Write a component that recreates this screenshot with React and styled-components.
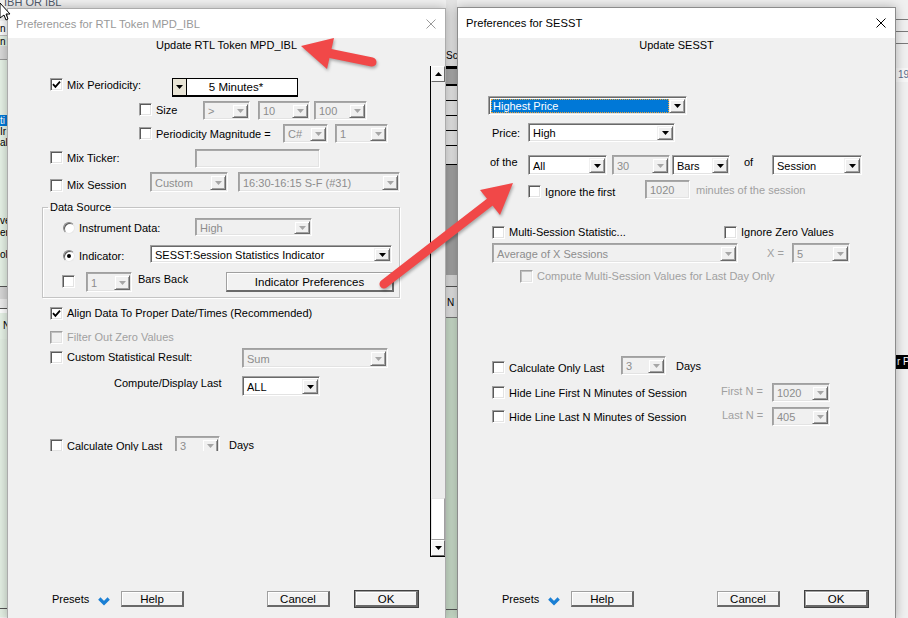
import styled, { createGlobalStyle } from "styled-components";

const GlobalStyle = createGlobalStyle`
  * { box-sizing: border-box; }
  body {
    margin: 0;
    background: #f0f0f0;
    font-family: "Liberation Sans", Arial, sans-serif;
  }
`;

// shifts an item inside a centred flex row: positive = down, negative = up
const shift = (p) => {
  const dy = p.$dy || 0;
  return `margin-top: ${dy > 0 ? dy * 2 : 0}px; margin-bottom: ${dy < 0 ? -dy * 2 : 0}px;`;
};

const Desktop = styled.div`
  position: relative;
  width: 908px;
  height: 618px;
  overflow: hidden;
  display: flex;
  align-items: flex-start;
  background: #f0f0f0;
  font-family: "Liberation Sans", Arial, sans-serif;
  font-size: 11px;
  color: #000;
`;

/* ---------- background application strips ---------- */

const Strip = styled.div`
  width: ${(p) => p.$w}px;
  height: 618px;
  flex-shrink: 0;
  display: flex;
  flex-direction: column;
`;

const Band = styled.div`
  height: ${(p) => p.$h}px;
  flex-shrink: 0;
  background: ${(p) => p.$bg || "#f0f0f0"};
  border-bottom: ${(p) => (p.$line ? `1px solid ${p.$line}` : "none")};
  color: ${(p) => p.$color || "#000"};
  line-height: ${(p) => p.$lh || p.$h}px;
  padding-left: ${(p) => p.$pl || 0}px;
  white-space: nowrap;
  font-size: 10px;
  overflow: hidden;
`;

const TopText = styled.div`
  height: 8px;
  width: 70px;
  flex-shrink: 0;
  padding-left: 4px;
  line-height: 4px;
  font-size: 11px;
  color: #505a6a;
  white-space: nowrap;
  overflow: hidden;
`;

/* ---------- dialog chrome ---------- */

const Dialog = styled.div`
  position: relative;
  z-index: 1;
  width: 439px;
  height: ${(p) => 620 - p.$top}px;
  margin-top: ${(p) => p.$top}px;
  flex-shrink: 0;
  display: flex;
  flex-direction: column;
  background: #f0f0f0;
  border: 1px solid ${(p) => (p.$active ? "#8c8c8c" : "#ababab")};
  box-shadow: 0 0 10px rgba(0, 0, 0, 0.28);
`;

const TitleBar = styled.div`
  height: ${(p) => p.$h}px;
  flex-shrink: 0;
  display: flex;
  align-items: center;
  justify-content: space-between;
  padding: 0 9px 0 8px;
  background: #fff;
  color: ${(p) => (p.$active ? "#000" : "#999")};
  font-size: 11.2px;
`;

const Body = styled.div`
  flex: 1;
  display: flex;
  flex-direction: column;
  overflow: hidden;
`;

const Header = styled.div`
  height: 14px;
  flex-shrink: 0;
  line-height: 14px;
  text-align: center;
`;

const Middle = styled.div`
  display: flex;
  align-items: flex-start;
  margin-top: 14px;
`;

const Viewport = styled.div`
  flex: 1;
  height: 385px;
  overflow: hidden;
  display: flex;
  flex-direction: column;
`;

const Rows = styled.div`
  display: flex;
  flex-direction: column;
`;

const Row = styled.div`
  display: flex;
  align-items: center;
  flex-shrink: 0;
  height: ${(p) => p.$h || 19}px;
  margin-top: ${(p) => p.$mt || 0}px;
  padding-left: ${(p) => p.$pl || 0}px;
`;

const Group = styled.fieldset`
  margin: ${(p) => p.$mt}px 0 0 34px;
  width: 358px;
  min-inline-size: auto;
  padding: 0 0 5px 0;
  border: 1px solid #c4c4c4;
  box-shadow: 1px 1px 0 #fff, inset 1px 1px 0 #fff;
`;

const Legend = styled.legend`
  margin-left: 5px;
  padding: 0 2px;
  line-height: 14px;
  font-size: 11px;
`;

/* ---------- controls ---------- */

const Opt = styled.label`
  display: flex;
  align-items: center;
  gap: 4px;
  flex-shrink: 0;
  width: ${(p) => (p.$w ? `${p.$w}px` : "auto")};
  margin-left: ${(p) => p.$ml || 0}px;
  color: ${(p) => (p.$off ? "#a0a0a0" : "#000")};
  white-space: nowrap;
  ${shift}
`;

const Text = styled.span`
  flex-shrink: 0;
  white-space: nowrap;
  width: ${(p) => (p.$w ? `${p.$w}px` : "auto")};
  margin-left: ${(p) => p.$ml || 0}px;
  color: ${(p) => (p.$off ? "#a0a0a0" : "#000")};
  ${shift}
`;

const Box = styled.span`
  width: 13px;
  height: 13px;
  flex-shrink: 0;
  display: flex;
  align-items: center;
  justify-content: center;
  background: ${(p) => (p.$off ? "#f0f0f0" : "#fff")};
  border: 1px solid;
  border-color: #a0a0a0 #fff #fff #a0a0a0;
  box-shadow: inset 1px 1px 0 ${(p) => (p.$off ? "#c0c0c0" : "#5a5a5a")},
    inset -1px -1px 0 #e3e3e3;
`;

const RadioDot = styled.span`
  width: 12px;
  height: 12px;
  flex-shrink: 0;
  border-radius: 50%;
  display: flex;
  align-items: center;
  justify-content: center;
  background: #fff;
  border: 1px solid;
  border-color: #8a8a8a #e8e8e8 #e8e8e8 #8a8a8a;
  box-shadow: inset 1px 1px 0 #5a5a5a;

  &::after {
    content: "";
    width: 4px;
    height: 4px;
    border-radius: 50%;
    background: ${(p) => (p.$on ? "#000" : "transparent")};
  }
`;

const Frame = styled.div`
  width: ${(p) => p.$w}px;
  height: ${(p) => p.$h || 19}px;
  margin-left: ${(p) => p.$ml || 0}px;
  flex-shrink: 0;
  display: flex;
  padding: 2px 1px 1px 2px;
  background: ${(p) => (p.$off ? "#f0f0f0" : "#fff")};
  border: 1px solid;
  border-color: #a0a0a0 #fff #fff #a0a0a0;
  box-shadow: inset 1px 1px 0 ${(p) => (p.$off ? "#a8a8a8" : "#696969")},
    inset -1px -1px 0 #e3e3e3;
`;

const Value = styled.span`
  flex: 1;
  min-width: 0;
  display: flex;
  align-items: center;
  padding-left: 2px;
  white-space: nowrap;
  overflow: hidden;
  color: ${(p) => (p.$sel ? "#fff" : p.$off ? "#8d8d8d" : "#000")};
  background: ${(p) => (p.$sel ? "#0078d7" : "transparent")};
  outline: ${(p) => (p.$sel ? "1px dotted #e8a23a" : "none")};
  outline-offset: -1px;
`;

const DropBtn = styled.span`
  width: 16px;
  flex-shrink: 0;
  display: flex;
  align-items: center;
  justify-content: center;
  background: #f0f0f0;
  border: 1px solid;
  border-color: #f0f0f0 #696969 #696969 #f0f0f0;
  box-shadow: inset 1px 1px 0 #fff, inset -1px -1px 0 #a0a0a0;
`;

const Arrow = ({ off, up }) => (
  <svg width="7" height="4" viewBox="0 0 7 4">
    <path d={up ? "M0 4H7L3.5 0Z" : "M0 0H7L3.5 4Z"} fill={off ? "#a6a6a6" : "#000"} />
  </svg>
);

const Check = ({ on, off }) => (
  <Box $off={off}>
    {on && (
      <svg width="9" height="9" viewBox="0 0 9 9">
        <path d="M1 4.2L3.4 6.8L8 1.6" fill="none" stroke="#000" strokeWidth="1.8" />
      </svg>
    )}
  </Box>
);

const Combo = ({ w, h, ml, value, off, sel }) => (
  <Frame $w={w} $h={h} $ml={ml} $off={off}>
    <Value $off={off} $sel={sel}>{value}</Value>
    <DropBtn>
      <Arrow off={off} />
    </DropBtn>
  </Frame>
);

const TextBox = ({ w, h, ml, value, off }) => (
  <Frame $w={w} $h={h} $ml={ml} $off={off}>
    <Value $off={off}>{value}</Value>
  </Frame>
);

const PeriodBox = styled.div`
  width: 126px;
  height: 19px;
  flex-shrink: 0;
  display: flex;
  border: 1px solid #000;
  border-width: 1px 1px 2px 1px;
  background: #fff;
`;

const PeriodBtn = styled.span`
  width: 14px;
  display: flex;
  align-items: center;
  justify-content: center;
  background: #e9e5d6;
  border-right: 1px solid #000;
`;

const PeriodValue = styled.span`
  flex: 1;
  display: flex;
  align-items: center;
  justify-content: center;
  padding-right: 12px;
  font-size: 11.5px;
`;

const PushButton = styled.button`
  width: ${(p) => p.$w}px;
  height: ${(p) => p.$h || 16}px;
  margin-left: ${(p) => p.$ml || 0}px;
  flex-shrink: 0;
  padding: 0;
  font-family: inherit;
  font-size: 11.5px;
  color: #000;
  background: #f2f2f2;
  border-style: solid;
  border-width: 1px 2px 2px 1px;
  border-color: #a0a0a0 #696969 #696969 #a0a0a0;
  box-shadow: inset 1px 1px 0 #fff;
  outline: ${(p) => (p.$default ? "1px solid #404040" : "none")};
`;

const ScrollBar = styled.div`
  width: 15px;
  height: 491px;
  flex-shrink: 0;
  display: flex;
  flex-direction: column;
  border-left: 1px solid #000;
  border-bottom: 1px solid #000;
  background: #f0f0f0;
`;

const ScrollBtn = styled.div`
  height: 16px;
  flex-shrink: 0;
  display: flex;
  align-items: center;
  justify-content: center;
  background: #f6f6f6;
  border: 1px solid;
  border-color: #fff #696969 #696969 #fff;
`;

const Track = styled.div`
  flex: 1;
  display: flex;
  flex-direction: column;
  justify-content: flex-end;
  background: #ececec;
`;

const Thumb = styled.div`
  height: 42px;
  background: #fff;
  border: 1px solid;
  border-color: #e6e6e6 #a0a0a0 #a0a0a0 #e6e6e6;
`;

const Footer = styled.div`
  margin-top: auto;
  margin-bottom: 12px;
  height: 16px;
  flex-shrink: 0;
  display: flex;
  align-items: center;
  padding-left: 44px;
`;

const Chevron = styled.svg`
  flex-shrink: 0;
  margin-top: 5px;
`;

const Overlay = styled.svg`
  position: absolute;
  left: 0;
  top: 0;
  z-index: 5;
  pointer-events: none;
`;

const CloseIcon = ({ color }) => (
  <svg width="10" height="10" viewBox="0 0 10 10">
    <path d="M0.5 0.5L9.5 9.5M9.5 0.5L0.5 9.5" stroke={color} strokeWidth="1" />
  </svg>
);

const DialogFooter = () => (
  <Footer>
    <Text $w={46}>Presets</Text>
    <Chevron width="12" height="9" viewBox="0 0 12 9">
      <path d="M1.3 1.5L6 6.2L10.7 1.5" fill="none" stroke="#1a7fd4" strokeWidth="3.2" />
    </Chevron>
    <PushButton $w={63} $ml={11}>Help</PushButton>
    <PushButton $w={63} $ml={83}>Cancel</PushButton>
    <PushButton $w={63} $ml={25} $default>OK</PushButton>
  </Footer>
);

/* ---------- dialogs ---------- */

const TokenDialog = () => (
  <Dialog $top={8}>
    <TitleBar $h={29}>
      <span>Preferences for RTL Token MPD_IBL</span>
      <CloseIcon color="#9a9a9a" />
    </TitleBar>
    <Body>
      <Header>Update RTL Token MPD_IBL</Header>
      <Middle>
        <Viewport>
          <Row $mt={12} $pl={42}>
            <Opt $w={122} $dy={-3}>
              <Check on />
              Mix Periodicity:
            </Opt>
            <PeriodBox>
              <PeriodBtn>
                <Arrow />
              </PeriodBtn>
              <PeriodValue>5 Minutes*</PeriodValue>
            </PeriodBox>
          </Row>
          <Row $mt={4} $pl={131}>
            <Opt $w={64} $dy={-1}>
              <Check />
              Size
            </Opt>
            <Combo w={47} value=">" off />
            <Combo w={52} ml={8} value="10" off />
            <Combo w={53} ml={4} value="100" off />
          </Row>
          <Row $mt={4} $pl={131}>
            <Opt $w={144}>
              <Check />
              Periodicity Magnitude =
            </Opt>
            <Combo w={45} value="C#" off />
            <Combo w={53} ml={7} value="1" off />
          </Row>
          <Row $mt={6} $pl={42}>
            <Opt $w={145} $dy={-1}>
              <Check />
              Mix Ticker:
            </Opt>
            <TextBox w={125} value="" off />
          </Row>
          <Row $mt={4} $h={20} $pl={42}>
            <Opt $w={100} $dy={3}>
              <Check />
              Mix Session
            </Opt>
            <Combo w={78} h={20} value="Custom" off />
            <Combo w={162} h={20} ml={10} value="16:30-16:15 S-F (#31)" off />
          </Row>
          <Group $mt={8}>
            <Legend>Data Source</Legend>
            <Row $mt={4} $h={18} $pl={20}>
              <Opt $w={132} $dy={1}>
                <RadioDot />
                Instrument Data:
              </Opt>
              <Combo w={117} h={18} value="High" off />
            </Row>
            <Row $mt={9} $h={18} $pl={20}>
              <Opt $w={87} $dy={2}>
                <RadioDot $on />
                Indicator:
              </Opt>
              <Combo w={242} h={18} value="SESST:Session Statistics Indicator" />
            </Row>
            <Row $mt={9} $h={20} $pl={19}>
              <Opt $w={24} $dy={-1}>
                <Check />
              </Opt>
              <Combo w={46} h={20} value="1" off />
              <Text $w={88} $ml={6} $dy={-3}>
                Bars Back
              </Text>
              <PushButton $w={168} $h={20}>
                Indicator Preferences
              </PushButton>
            </Row>
          </Group>
          <Row $mt={8} $h={14} $pl={42}>
            <Opt>
              <Check on />
              Align Data To Proper Date/Times (Recommended)
            </Opt>
          </Row>
          <Row $mt={10} $h={14} $pl={42}>
            <Opt $off>
              <Check off />
              Filter Out Zero Values
            </Opt>
          </Row>
          <Row $mt={4} $h={20} $pl={42}>
            <Opt $w={192} $dy={-1}>
              <Check />
              Custom Statistical Result:
            </Opt>
            <Combo w={146} h={20} value="Sum" off />
          </Row>
          <Row $mt={8} $h={20} $pl={106}>
            <Text $w={128} $dy={-3}>
              Compute/Display Last
            </Text>
            <Combo w={78} h={20} value="ALL" />
          </Row>
          <Row $mt={40} $pl={42}>
            <Opt $w={125}>
              <Check />
              Calculate Only Last
            </Opt>
            <Combo w={45} value="3" off />
            <Text $ml={9} $dy={-1}>
              Days
            </Text>
          </Row>
        </Viewport>
        <ScrollBar>
          <ScrollBtn>
            <Arrow up />
          </ScrollBtn>
          <Track>
            <Thumb />
          </Track>
          <ScrollBtn>
            <Arrow />
          </ScrollBtn>
        </ScrollBar>
      </Middle>
      <DialogFooter />
    </Body>
  </Dialog>
);

const SesstDialog = () => (
  <Dialog $top={7} $active>
    <TitleBar $h={30} $active>
      <span>Preferences for SESST</span>
      <CloseIcon color="#000" />
    </TitleBar>
    <Body>
      <Header>Update SESST</Header>
      <Rows>
        <Row $mt={44} $pl={30}>
          <Combo w={199} value="Highest Price" sel />
        </Row>
        <Row $mt={8} $pl={34}>
          <Text $w={36}>Price:</Text>
          <Combo w={147} value="High" />
        </Row>
        <Row $mt={13} $h={20} $pl={32}>
          <Text $w={38} $dy={-3}>
            of the
          </Text>
          <Combo w={79} h={20} value="All" />
          <Combo w={58} h={20} ml={5} value="30" off />
          <Combo w={58} h={20} ml={2} value="Bars" />
          <Text $w={28} $ml={14} $dy={-3}>
            of
          </Text>
          <Combo w={90} h={20} value="Session" />
        </Row>
        <Row $mt={5} $pl={70}>
          <Opt $w={117} $dy={2}>
            <Check />
            Ignore the first
          </Opt>
          <TextBox w={45} value="1020" off />
          <Text $ml={6} $off>
            minutes of the session
          </Text>
        </Row>
        <Row $mt={26} $h={14} $pl={34}>
          <Opt $w={232}>
            <Check />
            Multi-Session Statistic...
          </Opt>
          <Opt>
            <Check />
            Ignore Zero Values
          </Opt>
        </Row>
        <Row $mt={4} $h={20} $pl={34}>
          <Combo w={246} h={20} value="Average of X Sessions" off />
          <Text $w={25} $ml={29} $off>
            X =
          </Text>
          <Combo w={58} h={20} value="5" off />
        </Row>
        <Row $mt={4} $h={14} $pl={62}>
          <Opt $off $dy={2}>
            <Check off />
            Compute Multi-Session Values for Last Day Only
          </Opt>
        </Row>
        <Row $mt={75} $pl={34}>
          <Opt $w={129} $dy={2}>
            <Check />
            Calculate Only Last
          </Opt>
          <Combo w={45} value="3" off />
          <Text $ml={10}>Days</Text>
        </Row>
        <Row $mt={8} $pl={34}>
          <Opt $w={229}>
            <Check />
            Hide Line First N Minutes of Session
          </Opt>
          <Text $w={51} $off $dy={-2}>
            First N =
          </Text>
          <Combo w={58} value="1020" off />
        </Row>
        <Row $mt={5} $pl={34}>
          <Opt $w={230}>
            <Check />
            Hide Line Last N Minutes of Session
          </Opt>
          <Text $w={50} $off $dy={-2}>
            Last N =
          </Text>
          <Combo w={58} value="405" off />
        </Row>
      </Rows>
      <DialogFooter />
    </Body>
  </Dialog>
);

/* ---------- page ---------- */

const App = () => (
  <Desktop>
    <GlobalStyle />
    <Strip $w={7}>
      <TopText>IBH OR IBL</TopText>
      <Band $h={13} />
      <Band $h={15} $bg="#fbfbfb" $line="#bdbdbd">
        n
      </Band>
      <Band $h={10} $bg="#e2efe2" $lh={12}>
        n_
      </Band>
      <Band $h={14} $bg="#d9d9d9" $line="#9a9a9a" />
      <Band $h={55} $bg="#e6f2e6" />
      <Band $h={11} $bg="#0078d7" $color="#fff">
        ti
      </Band>
      <Band $h={11} $bg="#e6f2e6">
        Ir
      </Band>
      <Band $h={11} $bg="#e6f2e6">
        al
      </Band>
      <Band $h={67} $bg="#e6f2e6" />
      <Band $h={12} $bg="#e6f2e6">
        ve
      </Band>
      <Band $h={12} $bg="#e6f2e6">
        er
      </Band>
      <Band $h={10} $bg="#e6f2e6" />
      <Band $h={11} $bg="#e6f2e6">
        ol
      </Band>
      <Band $h={27} $bg="#e6f2e6" $line="#555" />
      <Band $h={12} $bg="#d6d6d6" />
      <Band $h={10} $bg="#ececec" $line="#555" />
      <Band $h={4} $bg="#fff" />
      <Band $h={26} $bg="#e6f2e6" $pl={3}>
        N
      </Band>
      <Band $h={270} $bg="#e3efe3" $line="#555" />
      <Band $h={8} $bg="#e3efe3" />
    </Strip>

    <TokenDialog />

    <Strip $w={11}>
      <Band $h={45} $bg="#e4e4e4" />
      <Band $h={21} $bg="#e4e4e4">
        Sc
      </Band>
      <Band $h={3} $bg="#000" />
      <Band $h={15} $bg="#a9a9a9" />
      <Band $h={2} $bg="#000" />
      <Band $h={15} $bg="#e6e6e6" $line="#000" />
      <Band $h={15} $bg="#e6e6e6" $line="#000" />
      <Band $h={15} $bg="#e6e6e6" $line="#000" />
      <Band $h={15} $bg="#e6e6e6" $line="#000" />
      <Band $h={19} $bg="#e6e6e6" $line="#000" />
      <Band $h={110} $bg="#a3a3a3" />
      <Band $h={12} $bg="#dcdcdc" $line="#555" />
      <Band $h={31} $bg="#e2e2e2" $line="#777" $pl={1}>
        N
      </Band>
      <Band $h={292} $bg="#c9dcc9" $line="#555" />
      <Band $h={10} $bg="#c9dcc9" />
    </Strip>

    <SesstDialog />

    <Strip $w={12}>
      <Band $h={20} $line="#7a7a7a" />
      <Band $h={12} $line="#7a7a7a" />
      <Band $h={12} $line="#7a7a7a" />
      <Band $h={24} />
      <Band $h={14} $bg="#f7f7f7" $color="#5b6b8c" $pl={2}>
        19
      </Band>
      <Band $h={273} />
      <Band $h={14} $bg="#000" $color="#fff" $pl={1}>
        r P
      </Band>
      <Band $h={236} />
    </Strip>

    <Overlay width="908" height="618" viewBox="0 0 908 618">
      <g style={{ filter: "drop-shadow(1px 2px 1.5px rgba(0,0,0,0.3))" }}>
        <line x1="372" y1="62" x2="328" y2="53" stroke="#f14848" strokeWidth="9" strokeLinecap="round" />
        <polygon points="301,46 334,38 327,69" fill="#f14848" />
        <line x1="384" y1="284" x2="490" y2="202" stroke="#f14848" strokeWidth="9" strokeLinecap="round" />
        <polygon points="513,183 480,190 500,215" fill="#f14848" />
      </g>
      <polygon points="0,3 10,14 6,14 8,19 6,20 4,15 0,18" fill="#fff" stroke="#000" strokeWidth="1" />
    </Overlay>
  </Desktop>
);

export default App;
